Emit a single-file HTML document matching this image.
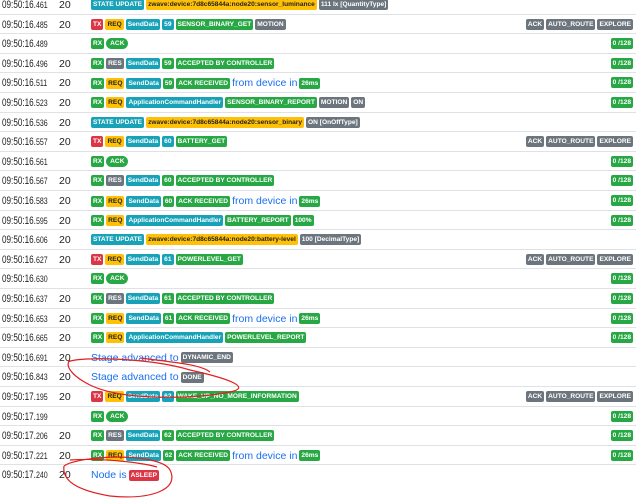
<!DOCTYPE html>
<html><head><meta charset="utf-8"><style>
body{margin:0;width:636px;height:499px;overflow:hidden;background:#fff;font-family:"Liberation Sans",Arial,sans-serif;position:relative}
.r{position:absolute;left:0;width:636px;height:19.6px;border-bottom:1px solid #dee2e6;box-sizing:border-box}
.t{position:absolute;left:2px;top:4px;font-size:11px;line-height:12px;color:#222;transform:scaleX(0.74);transform-origin:left;white-space:nowrap}
.t i{font-style:normal;font-size:9.5px}
.n{position:absolute;left:59px;top:4px;font-size:10.5px;line-height:12px;color:#222}
.b{position:absolute;left:91px;top:4px;display:flex;gap:2px;align-items:center;white-space:nowrap}
.rt{position:absolute;right:3px;top:4px;display:flex;gap:2px}
.g{display:inline-block;font-size:6.6px;font-weight:bold;color:#fff;padding:0 2px;height:11px;line-height:11px;border-radius:2px}
.p{border-radius:6px;padding:0 4px}
.bl{background:#17a2b8}.y{background:#ffc107;color:#222}.gr{background:#28a745}.rd{background:#dc3545}.gy{background:#6c757d}
.tx{font-size:10.5px;color:#1a6ff0}
</style></head><body>
<div class="r" style="top:-5px"><span class="t">09:50:16.<i>461</i></span><span class="n">20</span><div class="b"><span class="g bl">STATE UPDATE</span><span class="g y">zwave:device:7d8c65844a:node20:sensor_luminance</span><span class="g gy">111 lx [QuantityType]</span></div></div>
<div class="r" style="top:14.6px"><span class="t">09:50:16.<i>485</i></span><span class="n">20</span><div class="b"><span class="g rd">TX</span><span class="g y">REQ</span><span class="g bl">SendData</span><span class="g bl">59</span><span class="g gr">SENSOR_BINARY_GET</span><span class="g gy">MOTION</span></div><div class="rt"><span class="g gy">ACK</span><span class="g gy">AUTO_ROUTE</span><span class="g gy">EXPLORE</span></div></div>
<div class="r" style="top:34.2px"><span class="t">09:50:16.<i>489</i></span><div class="b"><span class="g gr">RX</span><span class="g gr p">ACK</span></div><div class="rt"><span class="g gr">0 /128</span></div></div>
<div class="r" style="top:53.8px"><span class="t">09:50:16.<i>496</i></span><span class="n">20</span><div class="b"><span class="g gr">RX</span><span class="g gy">RES</span><span class="g bl">SendData</span><span class="g gr">59</span><span class="g gr">ACCEPTED BY CONTROLLER</span></div><div class="rt"><span class="g gr">0 /128</span></div></div>
<div class="r" style="top:73.4px"><span class="t">09:50:16.<i>511</i></span><span class="n">20</span><div class="b"><span class="g gr">RX</span><span class="g y">REQ</span><span class="g bl">SendData</span><span class="g gr">59</span><span class="g gr">ACK RECEIVED</span><span class="tx">from device in</span><span class="g gr">26ms</span></div><div class="rt"><span class="g gr">0 /128</span></div></div>
<div class="r" style="top:93px"><span class="t">09:50:16.<i>523</i></span><span class="n">20</span><div class="b"><span class="g gr">RX</span><span class="g y">REQ</span><span class="g bl">ApplicationCommandHandler</span><span class="g gr">SENSOR_BINARY_REPORT</span><span class="g gy">MOTION</span><span class="g gy">ON</span></div><div class="rt"><span class="g gr">0 /128</span></div></div>
<div class="r" style="top:112.6px"><span class="t">09:50:16.<i>536</i></span><span class="n">20</span><div class="b"><span class="g bl">STATE UPDATE</span><span class="g y">zwave:device:7d8c65844a:node20:sensor_binary</span><span class="g gy">ON [OnOffType]</span></div></div>
<div class="r" style="top:132.2px"><span class="t">09:50:16.<i>557</i></span><span class="n">20</span><div class="b"><span class="g rd">TX</span><span class="g y">REQ</span><span class="g bl">SendData</span><span class="g bl">60</span><span class="g gr">BATTERY_GET</span></div><div class="rt"><span class="g gy">ACK</span><span class="g gy">AUTO_ROUTE</span><span class="g gy">EXPLORE</span></div></div>
<div class="r" style="top:151.8px"><span class="t">09:50:16.<i>561</i></span><div class="b"><span class="g gr">RX</span><span class="g gr p">ACK</span></div><div class="rt"><span class="g gr">0 /128</span></div></div>
<div class="r" style="top:171.4px"><span class="t">09:50:16.<i>567</i></span><span class="n">20</span><div class="b"><span class="g gr">RX</span><span class="g gy">RES</span><span class="g bl">SendData</span><span class="g gr">60</span><span class="g gr">ACCEPTED BY CONTROLLER</span></div><div class="rt"><span class="g gr">0 /128</span></div></div>
<div class="r" style="top:191px"><span class="t">09:50:16.<i>583</i></span><span class="n">20</span><div class="b"><span class="g gr">RX</span><span class="g y">REQ</span><span class="g bl">SendData</span><span class="g gr">60</span><span class="g gr">ACK RECEIVED</span><span class="tx">from device in</span><span class="g gr">26ms</span></div><div class="rt"><span class="g gr">0 /128</span></div></div>
<div class="r" style="top:210.6px"><span class="t">09:50:16.<i>595</i></span><span class="n">20</span><div class="b"><span class="g gr">RX</span><span class="g y">REQ</span><span class="g bl">ApplicationCommandHandler</span><span class="g gr">BATTERY_REPORT</span><span class="g gr">100%</span></div><div class="rt"><span class="g gr">0 /128</span></div></div>
<div class="r" style="top:230.2px"><span class="t">09:50:16.<i>606</i></span><span class="n">20</span><div class="b"><span class="g bl">STATE UPDATE</span><span class="g y">zwave:device:7d8c65844a:node20:battery-level</span><span class="g gy">100 [DecimalType]</span></div></div>
<div class="r" style="top:249.8px"><span class="t">09:50:16.<i>627</i></span><span class="n">20</span><div class="b"><span class="g rd">TX</span><span class="g y">REQ</span><span class="g bl">SendData</span><span class="g bl">61</span><span class="g gr">POWERLEVEL_GET</span></div><div class="rt"><span class="g gy">ACK</span><span class="g gy">AUTO_ROUTE</span><span class="g gy">EXPLORE</span></div></div>
<div class="r" style="top:269.4px"><span class="t">09:50:16.<i>630</i></span><div class="b"><span class="g gr">RX</span><span class="g gr p">ACK</span></div><div class="rt"><span class="g gr">0 /128</span></div></div>
<div class="r" style="top:289px"><span class="t">09:50:16.<i>637</i></span><span class="n">20</span><div class="b"><span class="g gr">RX</span><span class="g gy">RES</span><span class="g bl">SendData</span><span class="g gr">61</span><span class="g gr">ACCEPTED BY CONTROLLER</span></div><div class="rt"><span class="g gr">0 /128</span></div></div>
<div class="r" style="top:308.6px"><span class="t">09:50:16.<i>653</i></span><span class="n">20</span><div class="b"><span class="g gr">RX</span><span class="g y">REQ</span><span class="g bl">SendData</span><span class="g gr">61</span><span class="g gr">ACK RECEIVED</span><span class="tx">from device in</span><span class="g gr">26ms</span></div><div class="rt"><span class="g gr">0 /128</span></div></div>
<div class="r" style="top:328.2px"><span class="t">09:50:16.<i>665</i></span><span class="n">20</span><div class="b"><span class="g gr">RX</span><span class="g y">REQ</span><span class="g bl">ApplicationCommandHandler</span><span class="g gr">POWERLEVEL_REPORT</span></div><div class="rt"><span class="g gr">0 /128</span></div></div>
<div class="r" style="top:347.8px"><span class="t">09:50:16.<i>691</i></span><span class="n">20</span><div class="b"><span class="tx">Stage advanced to</span><span class="g gy">DYNAMIC_END</span></div></div>
<div class="r" style="top:367.4px"><span class="t">09:50:16.<i>843</i></span><span class="n">20</span><div class="b"><span class="tx">Stage advanced to</span><span class="g gy">DONE</span></div></div>
<div class="r" style="top:387px"><span class="t">09:50:17.<i>195</i></span><span class="n">20</span><div class="b"><span class="g rd">TX</span><span class="g y">REQ</span><span class="g bl">SendData</span><span class="g bl">62</span><span class="g gr">WAKE_UP_NO_MORE_INFORMATION</span></div><div class="rt"><span class="g gy">ACK</span><span class="g gy">AUTO_ROUTE</span><span class="g gy">EXPLORE</span></div></div>
<div class="r" style="top:406.6px"><span class="t">09:50:17.<i>199</i></span><div class="b"><span class="g gr">RX</span><span class="g gr p">ACK</span></div><div class="rt"><span class="g gr">0 /128</span></div></div>
<div class="r" style="top:426.2px"><span class="t">09:50:17.<i>206</i></span><span class="n">20</span><div class="b"><span class="g gr">RX</span><span class="g gy">RES</span><span class="g bl">SendData</span><span class="g gr">62</span><span class="g gr">ACCEPTED BY CONTROLLER</span></div><div class="rt"><span class="g gr">0 /128</span></div></div>
<div class="r" style="top:445.8px"><span class="t">09:50:17.<i>221</i></span><span class="n">20</span><div class="b"><span class="g gr">RX</span><span class="g y">REQ</span><span class="g bl">SendData</span><span class="g gr">62</span><span class="g gr">ACK RECEIVED</span><span class="tx">from device in</span><span class="g gr">26ms</span></div><div class="rt"><span class="g gr">0 /128</span></div></div>
<div class="r" style="top:465.4px;border:none"><span class="t">09:50:17.<i>240</i></span><span class="n">20</span><div class="b"><span class="tx">Node is</span><span class="g rd">ASLEEP</span></div></div>
<svg style="position:absolute;left:0;top:0" width="636" height="499"><g fill="none" stroke="#e02020" stroke-width="1.2">
<path d="M68 362 C80 356 150 358 190 370 C235 380 250 388 230 392 C190 400 120 400 90 385 C70 375 65 365 70 360"/>
<path d="M140 358 C170 362 200 364 210 372"/>
<path d="M64 466 C80 455 160 452 170 470 C180 490 150 500 110 496 C75 490 62 480 64 466"/>
<path d="M70 460 C100 458 140 462 157 467"/>
</g></svg>
</body></html>
